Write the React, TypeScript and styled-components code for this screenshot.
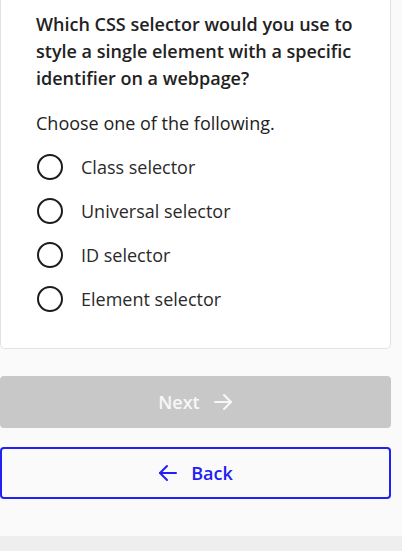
import React, { useState } from "react";
import styled, { createGlobalStyle } from "styled-components";

const Global = createGlobalStyle`
  html, body { margin: 0; padding: 0; background: #fafafa; }
  body { font-family: "Open Sans", "Noto Sans", sans-serif; color: #222; }
  * { box-sizing: border-box; }
`;

const Page = styled.div`
  width: 402px;
  height: 551px;
  display: flex;
  flex-direction: column;
  background: #fafafa;
  overflow: hidden;
`;

const Main = styled.main`
  flex: 1;
  width: 391px;
  display: flex;
  flex-direction: column;
`;

const Card = styled.section`
  background: #fff;
  border: 1px solid #e2e2e2;
  border-top: 0;
  border-radius: 0 0 5px 5px;
  padding: 11px 20px 27px 35px;
`;

const Question = styled.h2`
  margin: 0;
  font-size: 18px;
  line-height: 27px;
  font-weight: 600;
  color: #222;
`;

const Prompt = styled.p`
  margin: 18px 0 8px;
  font-size: 18px;
  line-height: 27px;
  color: #222;
`;

const Options = styled.div`
  display: flex;
  flex-direction: column;
`;

const Option = styled.label`
  display: flex;
  align-items: center;
  height: 44px;
  gap: 18px;
  font-size: 18px;
  color: #2a2a2a;
  cursor: pointer;
`;

const Circle = styled.span<{ $on: boolean }>`
  width: 26px;
  height: 26px;
  border-radius: 50%;
  border: 2px solid #1c1c1c;
  margin-left: 1px;
  flex: none;
  box-shadow: ${(p) => (p.$on ? "inset 0 0 0 5px #fff, inset 0 0 0 13px #1c1c1c" : "none")};
`;

const Actions = styled.div`
  display: flex;
  flex-direction: column;
  gap: 19px;
  margin-top: 27px;
`;

const Button = styled.button<{ $variant: "next" | "back" }>`
  height: 52px;
  width: 100%;
  border-radius: 4px;
  display: flex;
  align-items: center;
  justify-content: center;
  gap: 13px;
  font-family: "Open Sans", "Noto Sans", sans-serif;
  font-size: 18px;
  font-weight: 600;
  cursor: pointer;
  ${(p) =>
    p.$variant === "next"
      ? `background: #c8c8c8; color: #f7f7f7; border: 0;`
      : `background: #fafafa; color: #2121f2; border: 2px solid #2121f2;`}
`;

const Footer = styled.footer`
  height: 15px;
  background: #eeeeee;
  flex: none;
`;

const Arrow = ({ dir }: { dir: "left" | "right" }) => (
  <svg width="20" height="20" viewBox="0 0 20 20" fill="none" stroke="currentColor" strokeWidth="2" strokeLinecap="round" strokeLinejoin="round">
    {dir === "right" ? (
      <>
        <path d="M2 10h16" />
        <path d="M11 3l7 7-7 7" />
      </>
    ) : (
      <>
        <path d="M18 10H2" />
        <path d="M9 3l-7 7 7 7" />
      </>
    )}
  </svg>
);

const choices = ["Class selector", "Universal selector", "ID selector", "Element selector"];

export default function App() {
  const [sel, setSel] = useState<number | null>(null);
  return (
    <>
      <Global />
      <Page>
        <Main>
          <Card>
            <Question>
              Which CSS selector would you use to style a single element with a specific identifier on a webpage?
            </Question>
            <Prompt>Choose one of the following.</Prompt>
            <Options>
              {choices.map((c, i) => (
                <Option key={c} onClick={() => setSel(i)}>
                  <Circle $on={sel === i} />
                  {c}
                </Option>
              ))}
            </Options>
          </Card>
          <Actions>
            <Button $variant="next">
              Next <Arrow dir="right" />
            </Button>
            <Button $variant="back">
              <Arrow dir="left" /> Back
            </Button>
          </Actions>
        </Main>
        <Footer />
      </Page>
    </>
  );
}
